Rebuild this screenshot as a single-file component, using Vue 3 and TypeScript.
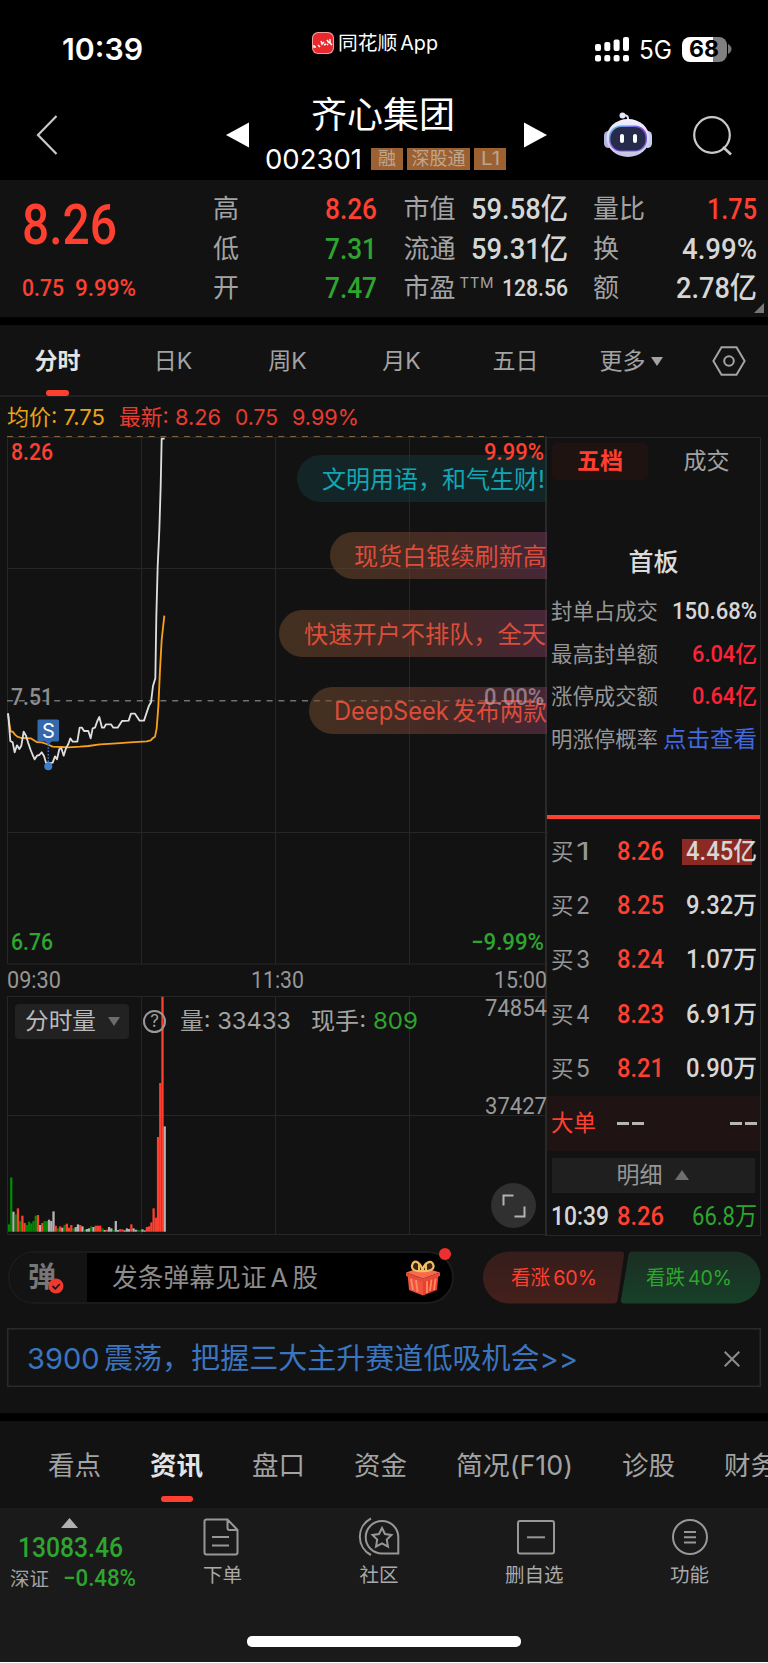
<script setup lang="ts">
type Tone = 'r' | 'g' | 'w'

interface Stat { label: string; value: string; tone: string; width: number; small?: boolean }
interface Level { name: string; price: string; qty: string; hot?: boolean }

/* Condenses or widens a run of text to the given advance width. */
const vFit = {
  mounted(el: HTMLElement, binding: { value: number }) {
    const natural = el.getBoundingClientRect().width
    if (!natural) return
    el.style.transform = `scaleX(${binding.value / natural})`
    el.style.marginRight = `${binding.value - natural}px`
  },
}

const statColumns: { cls: string; rows: Stat[] }[] = [
  { cls: 'c1', rows: [
    { label: '高', value: '8.26', tone: 'red', width: 52 },
    { label: '低', value: '7.31', tone: 'green', width: 52 },
    { label: '开', value: '7.47', tone: 'green', width: 52 },
  ] },
  { cls: 'c2', rows: [
    { label: '市值', value: '59.58亿', tone: 'light', width: 97 },
    { label: '流通', value: '59.31亿', tone: 'light', width: 97 },
    { label: '市盈', value: '128.56', tone: 'light', width: 66, small: true },
  ] },
  { cls: 'c3', rows: [
    { label: '量比', value: '1.75', tone: 'red', width: 50 },
    { label: '换', value: '4.99%', tone: 'light', width: 75 },
    { label: '额', value: '2.78亿', tone: 'light', width: 81 },
  ] },
]

const limitRows = [
  { label: '封单占成交', value: '150.68%', cls: 'light', width: 85 },
  { label: '最高封单额', value: '6.04亿', cls: 'crimson', width: 65 },
  { label: '涨停成交额', value: '0.64亿', cls: 'crimson', width: 65 },
  { label: '明涨停概率', value: '点击查看', cls: 'link', width: 94 },
]

const levels: Level[] = [
  { name: '1', price: '8.26', qty: '4.45亿', hot: true },
  { name: '2', price: '8.25', qty: '9.32万' },
  { name: '3', price: '8.24', qty: '1.07万' },
  { name: '4', price: '8.23', qty: '6.91万' },
  { name: '5', price: '8.21', qty: '0.90万' },
]

const pricePoints =
  '24,850 26,870 31,933 38,937 44,967 51,946 58,957 64,947 71,905 78,917 84,937 92,960 98,975 104,988 111,977 118,975 125,967 132,978 138,998 145,1000 158,998 165,979 171,988 178,957 184,955 191,977 198,955 205,942 211,925 218,935 232,935 239,893 246,893 252,903 265,903 272,925 278,895 285,893 292,873 298,861 306,893 312,893 318,883 333,883 340,893 353,893 366,873 386,872 393,851 405,851 419,872 432,872 440,848 447,827 453,817 459,768 466,745 469,560 473,410 478,300 482,170 485,26 494,26'
const averagePoints =
  '24,850 28,880 32,905 38,905 45,914 52,920 64,924 92,925 110,936 125,937 140,942 158,950 185,951 205,952 240,950 265,948 300,943 350,940 390,937 440,934 452,931 459,924 465,920 470,895 475,830 480,720 485,630 493,557'

const volumes: string =
  'g22 g163 w60 g52 r70 g32 r48 r26 g20 g30 g25 g32 g48 r50 w20 r26 g32 g32 w36 w32 w61 r18 g10 r16 w12 g20 r24 r12 r20 g10 w14 w22 r20 w16 g6 w8 w10 g16 w14 r18 r18 r18 g10 w5 r6 w14 w10 g5 w32 w5 r8 r7 w4 w10 w8 r22 w10 w6 g5 g4 w7 w4 r14 r16 r28 r70 r42 r284 r446 r705 w316'
const fills: Record<Tone, string> = { r: '#ff4030', g: '#038a03', w: '#b4b4b4' }
const bars = volumes.split(' ').map((v, i) => ({
  x: 0.9 + i * 2.224,
  h: Number(v.slice(1)) / 3,
  fill: fills[v[0] as Tone],
}))
</script>

<template>
  <div class="screen">
    <header class="status">
      <span v-fit="81" class="clock">10:39</span>
      <div class="island">
        <svg width="22" height="22" viewBox="0 0 22 22"><rect width="22" height="22" rx="6" fill="#f4a09c" /><rect x="1" y="1" width="20" height="20" rx="5.5" fill="#e8282c" /><path d="M2 13v2h2M6 13l2 2M9 9l1 3 2-2M12 13l2-1M15 8l2 3M18 7v4l2 2M15 12l1 1" stroke="#fff" stroke-width="1.5" fill="none" /></svg>
        <span v-fit="100" class="tight">同花顺 App</span>
      </div>
      <div class="signal">
        <svg width="34" height="26" viewBox="0 0 34 26" fill="#fff">
          <rect x="0" y="8" width="6" height="7" rx="2" /><rect x="9.3" y="6" width="6" height="9" rx="2" /><rect x="18.6" y="3.5" width="6" height="11.500" rx="2" /><rect x="28" y="1" width="6" height="14" rx="2" />
          <rect x="0" y="19" width="6" height="6.500" rx="2" /><rect x="9.3" y="19" width="6" height="6.500" rx="2" /><rect x="18.6" y="19" width="6" height="6.500" rx="2" /><rect x="28" y="19" width="6" height="6.500" rx="2" />
        </svg>
        <span v-fit="33" class="net">5G</span>
        <div class="battery"><span v-fit="30">68</span></div>
        <svg class="nub" width="4" height="10" viewBox="0 0 4 10"><path d="M0 0q3.500 2 3.500 5T0 10z" fill="#777" /></svg>
      </div>
    </header>

    <nav class="top">
      <svg class="back" width="24" height="42" viewBox="0 0 24 42"><path d="M21.500 2L3 21l18.500 19" fill="none" stroke="#c9c9c9" stroke-width="2.200" /></svg>
      <svg class="prev" width="23" height="26" viewBox="0 0 23 26"><path d="M0 13L23 .5v25z" fill="#fff" /></svg>
      <div class="stock">
        <h1><span v-fit="144">齐心集团</span></h1>
        <div class="code">
          <span v-fit="97" class="num">002301</span>
          <em class="tag"><span v-fit="18">融</span></em>
          <em class="tag t3"><span v-fit="54">深股通</span></em>
          <em class="tag"><span v-fit="19">L1</span></em>
        </div>
      </div>
      <svg class="next" width="23" height="26" viewBox="0 0 23 26"><path d="M23 13L0 .5v25z" fill="#fff" /></svg>
      <svg class="bot" width="50" height="46" viewBox="0 0 50 46">
        <defs>
          <linearGradient id="shell" x1="0" y1="0" x2="0" y2="1"><stop offset="0" stop-color="#f2f1ff" /><stop offset="1" stop-color="#c5c3e6" /></linearGradient>
          <linearGradient id="rim" x1="0" y1="0" x2="1" y2="1"><stop offset="0" stop-color="#55c8e8" /><stop offset=".5" stop-color="#8a48de" /><stop offset="1" stop-color="#6a69c8" /></linearGradient>
        </defs>
        <path d="M25 9V6q0-2.500-4-3" stroke="#dcdcf4" stroke-width="2" fill="none" /><circle cx="19.500" cy="3.500" r="3" fill="#e6e6fa" />
        <rect x="1" y="19" width="9" height="17" rx="4.500" fill="#aeb5de" /><rect x="40" y="19" width="9" height="17" rx="4.500" fill="#c8ccec" />
        <ellipse cx="25" cy="26" rx="21.500" ry="19" fill="url(#shell)" />
        <rect x="6" y="13.500" width="38" height="26" rx="12" fill="url(#rim)" /><rect x="7.500" y="15" width="35" height="23.500" rx="11" fill="#262b4c" />
        <rect x="17" y="22" width="4" height="9" rx="2" fill="#fff" /><rect x="30" y="22" width="4" height="9" rx="2" fill="#fff" />
      </svg>
      <svg class="search" width="42" height="42" viewBox="0 0 42 42"><circle cx="20" cy="20" r="17.800" fill="none" stroke="#c9c9c9" stroke-width="2.200" /><path d="M31 32l8 7.500" stroke="#c9c9c9" stroke-width="2.600" /></svg>
    </nav>

    <section class="stats">
      <div class="quote">
        <strong><span v-fit="95" class="din">8.26</span></strong>
        <p class="din"><span v-fit="42">0.75</span><span v-fit="61">9.99%</span></p>
      </div>
      <div v-for="col in statColumns" :key="col.cls" class="stat-col" :class="col.cls">
        <div v-for="s in col.rows" :key="s.label" class="stat">
          <span class="label">{{ s.label }}<sup v-if="s.small">TTM</sup></span>
          <span v-fit="s.width" class="din" :class="[s.tone, { small: s.small }]">{{ s.value }}</span>
        </div>
      </div>
      <svg class="corner" width="10" height="10" viewBox="0 0 10 10"><path d="M10 0v10H0z" fill="#777" /></svg>
    </section>

    <nav class="periods">
      <span class="on">分时</span><span>日K</span><span>周K</span><span>月K</span><span>五日</span>
      <span class="more">更多<svg width="12" height="9" viewBox="0 0 12 9"><path d="M0 0h12L6 9z" fill="#a3a3a3" /></svg></span>
      <svg class="hex" width="34" height="30" viewBox="0 0 34 30" fill="none" stroke="#a3a3a3" stroke-width="2"><path d="M9.500 1.200h15L32.600 15l-8.100 13.800h-15L1.400 15z" /><circle cx="17" cy="15" r="4.800" /></svg>
    </nav>

    <div class="averages">
      <span v-fit="98" class="gold">均价: 7.75</span>
      <span v-fit="102">最新: 8.26</span>
      <span v-fit="43">0.75</span>
      <span v-fit="67">9.99%</span>
    </div>

    <main class="board">
      <div class="charts">
        <div class="price">
          <svg class="grid" width="541" height="529" viewBox="0 0 541 529">
            <path d="M.5 1.500h540M.5 132.500h540M.5 396.500h540M.5 528h540M.5 1v527M134.500 1v527M268.500 1v527M402.500 1v527" stroke="#262626" fill="none" />
            <path d="M0 .5h540" stroke="#806545" stroke-dasharray="6 5.800" />
            <path d="M0 264.700h540" stroke="#717171" stroke-width="1.500" stroke-dasharray="6 5.800" />
            <g transform="translate(-7 -6) scale(.33333)" fill="none" stroke-width="5.500" stroke-linejoin="round">
              <polyline :points="averagePoints" stroke="#f8a01c" /><polyline :points="pricePoints" stroke="#dedede" />
            </g>
            <path d="M41.300 308v20" stroke="#3c7dcd" stroke-width="1.500" stroke-dasharray="1.500 1.800" />
            <rect x="30.500" y="283.500" width="21.500" height="22" rx="1.500" fill="#3469ad" /><path d="M38 305h7l-3.500 4z" fill="#3469ad" /><circle cx="41.300" cy="330.300" r="4" fill="#3c7dcd" />
          </svg>
          <span class="sell">S</span>
          <div class="pill p1"><span v-fit="223">文明用语，和气生财!</span></div>
          <div class="pill p2"><span v-fit="193">现货白银续刷新高</span></div>
          <div class="pill p3"><span v-fit="242">快速开户不排队，全天</span></div>
          <div class="pill p4"><span v-fit="213" class="tight">DeepSeek 发布两款</span></div>
          <span class="tick l hi red"><span v-fit="42">8.26</span></span>
          <span class="tick r hi red"><span v-fit="60">9.99%</span></span>
          <span class="tick l mid"><span v-fit="42">7.51</span></span>
          <span class="tick r mid"><span v-fit="60">0.00%</span></span>
          <span class="tick l lo green"><span v-fit="42">6.76</span></span>
          <span class="tick r lo green"><span v-fit="73">−9.99%</span></span>
        </div>
        <div class="times din"><span v-fit="54">09:30</span><span v-fit="53">11:30</span><span v-fit="53">15:00</span></div>
        <div class="volume">
          <svg class="grid" width="541" height="240" viewBox="0 0 541 240">
            <path d="M.5.5h540M.5 119.500h540M.5 238.500h540M.5 0v239M134.500 0v239M268.500 0v239M402.500 0v239" stroke="#262626" fill="none" />
            <rect v-for="(b, i) in bars" :key="i" :x="b.x" :y="235.700 - b.h" width="2.280" :height="b.h" :fill="b.fill" />
          </svg>
          <div class="vol-head">
            <span class="picker"><span v-fit="71">分时量</span><svg width="12" height="9" viewBox="0 0 12 9"><path d="M0 0h12L6 9z" fill="#6c6c6c" /></svg></span>
            <span class="help"><span>?</span></span>
            <span v-fit="111" class="vtext">量: 33433</span>
            <span v-fit="107" class="vtext">现手: <b>809</b></span>
          </div>
          <span class="vtick a din"><span v-fit="62">74854</span></span>
          <span class="vtick b din"><span v-fit="62">37427</span></span>
          <div class="expand"><svg width="24" height="24" viewBox="0 0 24 24" fill="none" stroke="#b2b2b2" stroke-width="2"><path d="M1.500 11.500v-10h10M22.500 12.500v10h-10" /></svg></div>
        </div>
      </div>

      <aside class="depth">
        <div class="dtabs"><span class="on">五档</span><span>成交</span></div>
        <h2>首板</h2>
        <div class="limits">
          <div v-for="r in limitRows" :key="r.label" class="limit"><span v-fit="107">{{ r.label }}</span><span v-fit="r.width" class="din" :class="r.cls">{{ r.value }}</span></div>
        </div>
        <div class="levels">
          <div v-for="l in levels" :key="l.name" class="level">
            <span class="who pair"><span>买</span><span v-fit="14" class="no">{{ l.name }}</span></span>
            <span class="at din red"><span v-fit="47">{{ l.price }}</span></span>
            <span class="din light qty" :class="{ hot: l.hot }"><span v-fit="71">{{ l.qty }}</span></span>
          </div>
          <div class="level big"><span class="who">大单</span><span class="at dash"><i></i><i></i></span><span class="qty dash"><i></i><i></i></span></div>
        </div>
        <div class="detail">明细<svg width="14" height="10" viewBox="0 0 14 10"><path d="M7 0l7 10H0z" fill="#6e6e6e" /></svg></div>
        <div class="level last"><span class="who din light"><span v-fit="58">10:39</span></span><span class="at din red"><span v-fit="47">8.26</span></span><span class="qty green din thin"><span v-fit="65">66.8万</span></span></div>
      </aside>
    </main>

    <section class="talk">
      <div class="composer">
        <div class="toggle">弹<svg width="16" height="16" viewBox="0 0 16 16"><circle cx="8" cy="8" r="7.500" fill="#ee392e" /><path d="M4.500 8l2.800 2.800L11.800 6" fill="none" stroke="#2a1010" stroke-width="1.800" /></svg></div>
        <div class="field"><span v-fit="206" class="tight">发条弹幕见证 A 股</span></div>
        <svg class="gift" width="34" height="36" viewBox="0 0 34 36">
          <path d="M1.500 14l15.500 5v16.500L3 30z" fill="#ef5340" /><path d="M32.500 14L17 19v16.500L31 30z" fill="#e8402f" />
          <path d="M5 19l2 11M10 20l1.500 12M21 21v12M25.500 19.500L24 31M29.500 18.500L28 30" stroke="#ff8a63" stroke-width="1.800" />
          <path d="M0 12.500L16 7l18 5.500-17 6z" fill="#f86a4b" /><path d="M0 12.500l17 6 17-6v3.500l-17 6-17-6z" fill="#e34b38" />
          <path d="M16.500 11Q5 12 6 5.500 7.500-.5 12.500 3q3.500 3 4 8 1-5.500 4.500-8 5-3 6.500 2.500 1 6-11 5.500z" fill="#3b2413" stroke="#efbd63" stroke-width="2.200" /><path d="M13 4v6M20 4v6" stroke="#efbd63" stroke-width="2" />
        </svg>
        <i class="dot"></i>
      </div>
      <div class="votes">
        <svg width="278" height="53" viewBox="0 0 278 53">
          <defs>
            <linearGradient id="up" x1="0" y1="0" x2="0" y2="1"><stop offset="0" stop-color="#341d1b" /><stop offset="1" stop-color="#44201b" /></linearGradient>
            <linearGradient id="down" x1="0" y1="0" x2="0" y2="1"><stop offset="0" stop-color="#1b2e23" /><stop offset="1" stop-color="#174029" /></linearGradient>
          </defs>
          <path d="M26 .5h112q3.500 0 3 3.500l-6.500 45q-.5 3.500-4 3.500H26a26 26 0 010-52z" fill="url(#up)" />
          <path d="M251.500.5H149q-3 0-3.500 3.500l-7.500 45q-.5 3.500 3 3.500h110.500a26 26 0 000-52z" fill="url(#down)" />
        </svg>
        <div class="vote-text"><span v-fit="86" class="red tight">看涨 60%</span><span v-fit="86" class="green tight">看跌 40%</span></div>
      </div>
    </section>

    <div class="banner"><span v-fit="551" class="tight">3900 震荡，把握三大主升赛道低吸机会&gt;&gt;</span><svg width="16" height="16" viewBox="0 0 16 16"><path d="M.7.7l14.600 14.600M15.300.7L.7 15.300" stroke="#8c8c8c" stroke-width="2" /></svg></div>

    <nav class="sections">
      <span>看点</span><span class="on">资讯</span><span>盘口</span><span>资金</span><span v-fit="117">简况(F10)</span><span>诊股</span><span>财务</span>
    </nav>

    <footer class="dock">
      <div class="index">
        <svg width="17" height="10" viewBox="0 0 17 10"><path d="M8.500 0L17 10H0z" fill="#b0b0b0" /></svg>
        <strong class="din"><span v-fit="105">13083.46</span></strong>
        <p><span class="name">深证</span><span v-fit="73" class="din">−0.48%</span></p>
      </div>
      <div class="act a1">
        <svg width="36" height="40" viewBox="0 0 36 40" fill="none" stroke="#979797" stroke-width="2"><path d="M24.500 2.500H3.500q-2 0-2 2v31q0 2 2 2h29q2 0 2-2V13zv8.500q0 2 2 2h8M9 20h17M9 28.500h17" /></svg><span>下单</span>
      </div>
      <div class="act a2">
        <svg width="42" height="40" viewBox="0 0 42 40" fill="none" stroke="#979797" stroke-width="2"><path d="M13 1.500A20.500 20.500 0 0013 38M24 4a16.300 16.300 0 100 32.600h16.300V20.300A16.300 16.300 0 0024 4z" /><path d="M24 11l3 6 6.500 1-4.700 4.600 1.200 7-6-3.200-6 3.200 1.200-7L14.500 18l6.500-1z" /></svg><span>社区</span>
      </div>
      <div class="act a3">
        <svg width="38" height="40" viewBox="0 0 38 40" fill="none" stroke="#979797" stroke-width="2"><rect x="1" y="4" width="36" height="32.500" rx="2" /><path d="M10 20.300h18" /></svg><span>删自选</span>
      </div>
      <div class="act a4">
        <svg width="36" height="40" viewBox="0 0 36 40" fill="none" stroke="#979797" stroke-width="2"><circle cx="18" cy="20" r="17" /><path d="M12 15h12M12 20.300h12M12 25.500h12" /></svg><span>功能</span>
      </div>
      <i class="home"></i>
    </footer>
  </div>
</template>

<style>
body { background: #fff; }
</style>

<style scoped>
* { box-sizing: border-box; }
.screen { width: 768px; height: 1662px; overflow: hidden; background: #000; color: #a3a3a3; font-family: Inter, "Noto Sans CJK SC", sans-serif; font-size: 23px; line-height: 30px; white-space: nowrap; }
.screen span, .screen svg { flex-shrink: 0; }
span { transform-origin: left center; }
svg { display: block; }
h1, h2, p { margin: 0; font-weight: 400; }
i { font-style: normal; display: block; }
.tight { word-spacing: -.13em; }
.din { font-family: Roboto, "Noto Sans CJK SC", sans-serif; font-weight: 500; }
.red { color: #ff4030; }
.green { color: #2ea52e; }
.light { color: #d6d6d6; }
.crimson { color: #fd2238; }
.din.link { color: #4169e1; font-weight: 400; }

.status { display: grid; grid-template-columns: 312px 283px 173px; height: 90px; color: #fff; }
.clock { justify-self: start; margin-left: 62px; margin-top: 29px; height: 40px; line-height: 40px; font-size: 30px; font-weight: 600; }
.island { display: flex; gap: 4px; padding-top: 32px; height: 54px; align-items: center; font-size: 19.5px; }
.signal { display: flex; align-items: center; height: 26px; margin-top: 36px; }
.net { font-size: 25px; margin-left: 10px; padding-top: 2px; }
.battery { display: flex; width: 45px; height: 25px; margin-left: 10px; padding-left: 7px; border-radius: 8px; background: linear-gradient(90deg, #fff 31px, #808080 31px); color: #000; font-weight: 700; font-size: 23px; line-height: 25px; }
.nub { margin-left: 1px; }

.top { display: flex; height: 90px; color: #fff; }
.back { margin: 24px 0 0 35px; }
.prev { margin: 32px 0 0 167px; }
.stock { width: 275px; padding-left: 16px; }
.stock h1 { height: 53px; padding-left: 46px; font-size: 36px; line-height: 51px; display: flex; }
.code { display: flex; align-items: center; height: 32px; gap: 4px; }
.code .num { font-size: 27.5px; line-height: 28px; padding-bottom: 1px; }
.tag { display: flex; justify-content: center; width: 32px; height: 22px; background: #9c6133; color: #bda78f; font-style: normal; font-size: 18px; line-height: 22px; }
.tag:nth-child(2) { margin-left: 5px; }
.tag.t3 { width: 63px; }
.next { margin: 32px 0 0; }
.bot { margin: 22px 0 0 56px; }
.search { margin: 25px 0 0 39px; }

.stats { position: relative; display: flex; height: 145px; background: #121212; border-bottom: 8px solid #000; padding-top: 9px; }
.quote { width: 213px; padding-left: 22px; color: #ff4030; }
.quote strong { display: flex; height: 72px; line-height: 73px; font-size: 55px; font-weight: 500; }
.quote p { display: flex; gap: 11px; font-size: 23.5px; padding-top: 12px; }
.stat-col { display: grid; grid-template-rows: repeat(3, 39.7px); }
.c1 { width: 164px; }
.c2 { width: 164px; margin-left: 26.500px; }
.c3 { width: 164px; margin-left: 25.500px; }
.stat { display: flex; justify-content: space-between; align-items: center; font-size: 29.5px; }
.stat .label { font-size: 26px; display: flex; }
.stat .small { font-size: 24px; }
sup { font-size: 15px; line-height: 20px; letter-spacing: .5px; margin-left: 4px; }
.corner { position: absolute; right: 4.500px; bottom: 4px; }

.periods { display: grid; grid-template-columns: 115px 116px 113px 115px 113px 118px 78px; align-items: center; text-align: center; height: 72px; background: #121212; border-bottom: 2px solid #202020; }
.periods > span { height: 72px; line-height: 73px; position: relative; }
.periods .on, .sections .on { color: #e4e4e4; font-weight: 700; }
.periods .on::after { content: ""; position: absolute; left: 46px; bottom: 1px; width: 23px; height: 6px; border-radius: 3px; background: #ff4030; }
.periods .more { display: flex; gap: 5px; align-items: center; justify-content: center; }
.hex { margin-left: 22px; }
.averages { display: flex; gap: 14px; height: 39px; padding-left: 7px; line-height: 41px; font-size: 22px; color: #e83c30; background: #121212; }
.gold { color: #eba516; }

.board { display: grid; grid-template-columns: 547px 214px; height: 800px; background: #121212; }
.charts { padding-left: 7px; border-right: 2px solid #292929; height: 800px; }
.price, .volume, .times { position: relative; width: 539.500px; }
.price { height: 528px; }
.grid { position: absolute; left: 0; top: 0; }
.sell { position: absolute; left: 30.500px; top: 283.500px; width: 22px; text-align: center; line-height: 22px; color: #fff; font-size: 20px; }
.pill { position: absolute; right: 0; height: 47px; line-height: 49px; border-radius: 24px 0 0 24px; padding-left: 25px; font-size: 24px; display: flex; overflow: hidden; color: #dc4d3b; background: linear-gradient(90deg, rgba(108, 72, 43, .55), rgba(112, 62, 52, .55) 55%, rgba(112, 55, 83, .55)); }
.p1 { top: 18.500px; width: 250px; background: rgba(20, 55, 58, .5); color: #12a6b5; }
.p2 { top: 96px; width: 217px; padding-left: 24px; line-height: 50px; }
.p3 { top: 173.500px; width: 268px; }
.p4 { top: 251px; width: 238px; font-size: 25px; line-height: 48px; }
.tick { position: absolute; display: flex; font: 500 23px/24px Roboto, sans-serif; }
.l { left: 4px; }
.r { right: 3px; }
.hi { top: 5px; }
.mid { top: 250px; color: #8d8d8d; }
.r.mid { color: rgba(180, 160, 172, .7); }
.lo { top: 495px; }
.times { display: flex; justify-content: space-between; height: 32px; line-height: 32px; font-size: 23.500px; color: #969696; font-weight: 400; }
.volume { height: 240px; }
.vol-head { position: relative; display: flex; align-items: center; padding: 7px 0 0 8px; height: 43px; font-size: 23px; }
.picker { display: flex; align-items: center; justify-content: space-between; width: 114px; height: 35px; padding: 0 9px 0 10px; border-radius: 4px; background: #222; color: #bababa; }
.help { width: 23px; height: 23px; margin-left: 14px; border: 2px solid #999; border-radius: 50%; text-align: center; font-size: 17px; line-height: 19px; }
.help span { display: block; }
.vtext { margin-left: 13.500px; }
.vtext + .vtext { margin-left: 20.500px; }
b { font-weight: 400; color: #2ea52e; }
.vtick { position: absolute; right: 0; display: flex; font-size: 23px; line-height: 24px; font-weight: 400; color: #999; }
.a { top: 1px; }
.b { top: 99px; }
.expand { position: absolute; right: 10.500px; top: 187px; width: 45px; height: 45px; border-radius: 50%; background: #303030; display: grid; place-items: center; }

.depth { border: 1px solid #262626; border-left: 0; height: 799px; margin-top: 1px; }
.dtabs { display: grid; grid-template-columns: 96px 115px; padding: 5px 0 0 5px; text-align: center; line-height: 37px; }
.dtabs span { border-radius: 5px; }
.dtabs span + span { padding-left: 2px; }
.dtabs .on { background: #1f1312; color: #ff4030; font-weight: 700; }
h2 { color: #dcdcdc; font-size: 25px; font-weight: 500; text-align: center; padding: 67px 0 15px; line-height: 30px; }
.limits { height: 227px; padding: 0 3px 0 3.500px; border-bottom: 4px solid #ff4030; }
.limit { display: flex; justify-content: space-between; height: 42.700px; line-height: 39px; font-size: 21.500px; color: #969696; }
.limit .din { font-size: 23px; }
.levels { padding-top: 5.500px; }
.level { display: flex; align-items: center; height: 54.300px; padding: 0 3px 0 4px; font-size: 22.500px; position: relative; color: #969696; }
.pair { display: flex; gap: 2px; }
.no { font-size: 24px; }
.at, .qty { display: flex; font-size: 25px; }
.level .at { position: absolute; left: 70px; }
.qty { margin-left: auto; }
.hot { background: linear-gradient(#8a2a22, #8a2a22) 0 50% / 70px 26px no-repeat; padding-left: 4px; }
.big { background: #1f1313; color: #ff4030; height: 55px; }
.dash { gap: 3px; }
.dash i { width: 12px; height: 3px; background: #b6b6b6; }
.detail { display: flex; gap: 12px; align-items: center; justify-content: center; height: 35px; margin: 7px 5px 0; padding-right: 2px; background: #1f1f1f; color: #969696; }
.last { height: 49px; }
.last .who { display: flex; font-size: 25px; }
.thin { font-weight: 400; }

.talk { display: flex; justify-content: space-between; height: 92px; padding: 14.500px 7.500px 0 8px; background: #121212; }
.composer { position: relative; display: flex; width: 446px; height: 53px; border: 2px solid #1b1b1b; border-radius: 27px; background: #000; }
.toggle { position: relative; width: 77px; background: #131313; border-radius: 25px 0 0 25px; padding-left: 18px; line-height: 48px; font-size: 28px; font-weight: 700; color: #777; }
.toggle svg { position: absolute; left: 38px; top: 25px; }
.field { padding-left: 25px; line-height: 50px; font-size: 26px; color: #8c8c8c; display: flex; }
.gift { position: absolute; left: 396px; top: 7px; }
.dot { position: absolute; left: 429px; top: -5px; width: 12px; height: 12px; border-radius: 50%; background: #ee2f2f; }
.votes { display: grid; align-content: start; }
.votes > * { grid-area: 1 / 1; }
.vote-text { display: flex; gap: 49px; padding-left: 28px; font-size: 20px; line-height: 54px; height: 53px; }
.banner { display: flex; justify-content: space-between; align-items: center; height: 85px; border: solid #121212; border-width: 0 7px 26px; padding: 2px 21px 0 20px; background: #121212; box-shadow: inset 0 0 0 1.500px #2a2a2a; font-size: 29px; line-height: 56px; color: #3b75bf; }
.sections { display: flex; gap: 49px; height: 95px; padding-left: 48px; border-top: 8px solid #000; background: #121212; font-size: 26.500px; line-height: 89px; overflow: hidden; }
.sections span { height: 87px; }
.sections .on { position: relative; }
.sections .on::after { content: ""; position: absolute; left: 10.500px; top: 75px; width: 32px; height: 6px; border-radius: 3px; background: #ff4030; }

.dock { position: relative; display: flex; height: 154px; background: #1a1a1a; font-size: 19.500px; color: #a9a9a9; }
.index { width: 203px; padding: 10px 0 0 10px; color: #2ea52e; }
.index svg { margin-left: 51px; }
.index strong { display: flex; padding-left: 8px; height: 36px; font-size: 28px; line-height: 40px; }
.index p { display: flex; gap: 14px; line-height: 28px; }
.index p .din { font-size: 24px; }
.name { color: #a3a3a3; padding-top: 1px; }
.act { position: absolute; top: 9px; display: flex; flex-direction: column; align-items: center; gap: 1px; line-height: 34px; }
.a1 { left: 203px; }
.a1 svg { margin-left: -4px; }
.a2 { left: 358px; }
.a3 { left: 505px; }
.a3 svg { margin-left: 3px; }
.a4 { left: 670px; }
.home { position: absolute; left: 247px; bottom: 15.500px; width: 274px; height: 10.500px; border-radius: 5px; background: #fff; }
</style>
